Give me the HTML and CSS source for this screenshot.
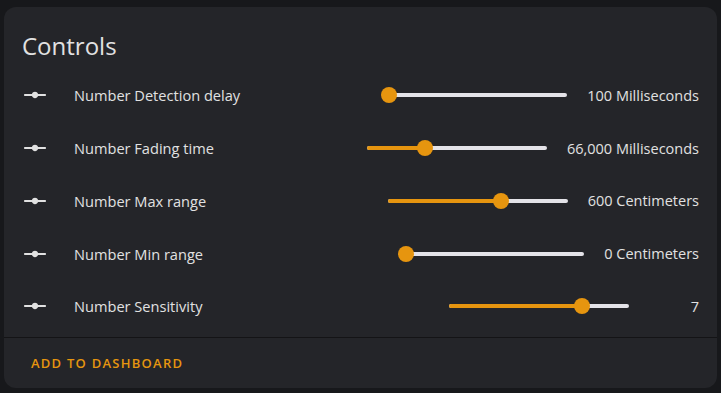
FILE: index.html
```html
<!DOCTYPE html>
<html lang="en">
<head>
    <meta charset="UTF-8">
    <meta name="viewport" content="width=device-width, initial-scale=1.0">
    <title>Controls</title>
    <link rel="stylesheet" href="styles.css">
</head>
<body>
    <div class="card">
        <h1 class="card-title">Controls</h1>

        <div class="rows">
            <div class="row">
                <svg class="icon" viewBox="0 0 24 24"><path d="M2,11H9.17C9.58,9.83 10.69,9 12,9C13.31,9 14.42,9.83 14.83,11H22V13H14.83C14.42,14.17 13.31,15 12,15C10.69,15 9.58,14.17 9.17,13H2V11Z"/></svg>
                <span class="label">Number Detection delay</span>
                <div class="slider">
                    <div class="fill" style="width: 0%"></div>
                    <div class="thumb" style="left: 1%"></div>
                </div>
                <span class="value">100 Milliseconds</span>
            </div>
            <div class="row">
                <svg class="icon" viewBox="0 0 24 24"><path d="M2,11H9.17C9.58,9.83 10.69,9 12,9C13.31,9 14.42,9.83 14.83,11H22V13H14.83C14.42,14.17 13.31,15 12,15C10.69,15 9.58,14.17 9.17,13H2V11Z"/></svg>
                <span class="label">Number Fading time</span>
                <div class="slider">
                    <div class="fill" style="width: 32%"></div>
                    <div class="thumb" style="left: 32%"></div>
                </div>
                <span class="value">66,000 Milliseconds</span>
            </div>
            <div class="row">
                <svg class="icon" viewBox="0 0 24 24"><path d="M2,11H9.17C9.58,9.83 10.69,9 12,9C13.31,9 14.42,9.83 14.83,11H22V13H14.83C14.42,14.17 13.31,15 12,15C10.69,15 9.58,14.17 9.17,13H2V11Z"/></svg>
                <span class="label">Number Max range</span>
                <div class="slider">
                    <div class="fill" style="width: 63%"></div>
                    <div class="thumb" style="left: 63%"></div>
                </div>
                <span class="value">600 Centimeters</span>
            </div>
            <div class="row">
                <svg class="icon" viewBox="0 0 24 24"><path d="M2,11H9.17C9.58,9.83 10.69,9 12,9C13.31,9 14.42,9.83 14.83,11H22V13H14.83C14.42,14.17 13.31,15 12,15C10.69,15 9.58,14.17 9.17,13H2V11Z"/></svg>
                <span class="label">Number Min range</span>
                <div class="slider">
                    <div class="fill" style="width: 0%"></div>
                    <div class="thumb" style="left: 1%"></div>
                </div>
                <span class="value">0 Centimeters</span>
            </div>
            <div class="row">
                <svg class="icon" viewBox="0 0 24 24"><path d="M2,11H9.17C9.58,9.83 10.69,9 12,9C13.31,9 14.42,9.83 14.83,11H22V13H14.83C14.42,14.17 13.31,15 12,15C10.69,15 9.58,14.17 9.17,13H2V11Z"/></svg>
                <span class="label">Number Sensitivity</span>
                <div class="slider">
                    <div class="fill" style="width: 74%"></div>
                    <div class="thumb" style="left: 74%"></div>
                </div>
                <span class="value">7</span>
            </div>
        </div>

        <div class="card-actions">
            <button class="action">Add to dashboard</button>
        </div>
    </div>
</body>
</html>
```

FILE: styles.css
```css
body {
    margin: 0;
    padding: 7px 4px 5px 4px;
    background-color: #17181b;
    color: #e1e1e1;
    font-family: "Open Sans", "Noto Sans", sans-serif;
}

.card {
    background-color: #242529;
    border-radius: 12px;
    height: 381px;
    display: flex;
    flex-direction: column;
}

.card-title {
    margin: 0;
    padding: 23px 18px 7px 18px;
    font-size: 24px;
    font-weight: 400;
    line-height: 32px;
    color: #e1e1e1;
}

.rows {
    padding: 0 18px 4px 18px;
}

.row {
    display: flex;
    align-items: center;
    height: 52.75px;
}

.icon {
    width: 26px;
    height: 26px;
    fill: #e1e1e1;
    flex-shrink: 0;
}

.label {
    margin-left: 26px;
    flex: 1;
    font-size: 14.6px;
}

.slider {
    position: relative;
    width: 180px;
    height: 4px;
    border-radius: 2px;
    background-color: #e4e3e8;
    margin-right: 20px;
    flex-shrink: 0;
}

.fill {
    height: 100%;
    border-radius: 2px;
    background-color: #e6950f;
}

.thumb {
    position: absolute;
    top: 50%;
    width: 16px;
    height: 16px;
    border-radius: 50%;
    background-color: #e6950f;
    transform: translate(-50%, -50%);
}

.value {
    min-width: 50px;
    text-align: right;
    font-size: 14.5px;
}

.card-actions {
    border-top: 1px solid #141416;
    flex: 1;
    display: flex;
    align-items: center;
    padding: 0 18px 0 27px;
}

.action {
    background: none;
    border: none;
    padding: 0;
    font-family: "Open Sans", "Noto Sans", sans-serif;
    font-size: 13px;
    font-weight: 600;
    letter-spacing: 1.25px;
    text-transform: uppercase;
    color: #e6950f;
    cursor: pointer;
}
```
